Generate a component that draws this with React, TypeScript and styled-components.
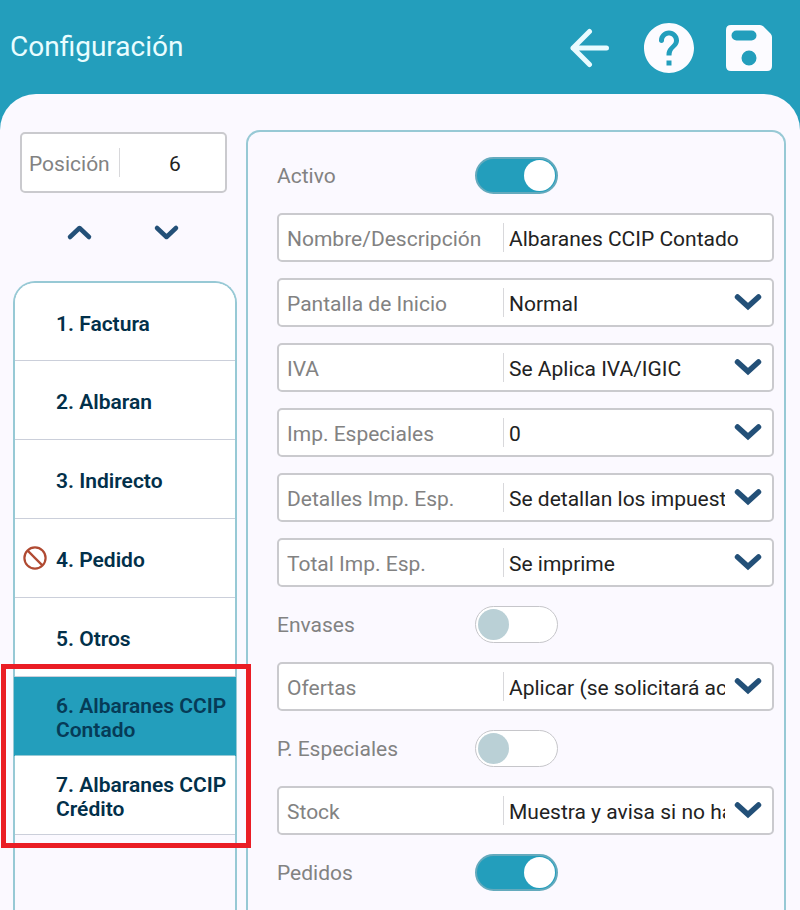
import React, { useState } from "react";
import styled, { createGlobalStyle, css } from "styled-components";

const teal = "#239ebc";
const surface = "#fbf9ff";
const outline = "#97c9d5";
const navy = "#235078";

const GlobalStyle = createGlobalStyle`
  *, *::before, *::after { box-sizing: border-box; }
  body {
    margin: 0;
    background: ${surface};
    font-family: Roboto, "Liberation Sans", sans-serif;
    font-size: 21px;
  }
  button, input, select { font: inherit; }
`;

const Page = styled.div`
  display: flex;
  flex-direction: column;
  height: 100vh;
  background: ${teal};
  overflow: hidden;
`;

const Header = styled.header`
  display: flex;
  flex: none;
  align-items: center;
  justify-content: space-between;
  height: 94px;
  padding: 0 28px 0 10px;
`;

const Title = styled.h1`
  margin: 0;
  color: #e9fdff;
  font-size: 28px;
  font-weight: 400;
  line-height: 32px;
`;

const Actions = styled.div`
  display: flex;
  align-items: center;
  gap: 32px;
  padding-top: 2px;
`;

const IconButton = styled.button`
  display: flex;
  padding: 0;
  border: 0;
  background: none;
  color: #fcfbff;
  cursor: pointer;
`;

const Content = styled.main`
  display: grid;
  flex: 1;
  min-height: 0;
  grid-template-columns: 224px 1fr;
  gap: 9px;
  padding: 36px 14px 0 13px;
  border-radius: 36px 36px 0 0;
  background: ${surface};
`;

const Sidebar = styled.aside`
  display: flex;
  flex-direction: column;
  min-height: 0;
`;

const box = css`
  display: flex;
  align-items: center;
  border: 2px solid #cacace;
  border-radius: 5px;
  background: #fff;
`;

const PositionBox = styled.div`
  ${box}
  flex: none;
  height: 61px;
  margin: 2px 10px 0 7px;
  padding-left: 7px;
`;

const fieldCaption = css`
  flex: none;
  height: 29px;
  padding-top: 2px;
  border-right: 1px solid #d8d8db;
  color: #828282;
  line-height: 29px;
`;

const PositionLabel = styled.label`
  ${fieldCaption}
  width: 91px;
`;

const PositionInput = styled.input`
  flex: 1;
  min-width: 0;
  padding: 3px 0 0 5px;
  border: 0;
  outline: 0;
  background: none;
  color: #222;
  text-align: center;
`;

const Movers = styled.div`
  display: flex;
  flex: none;
  align-items: center;
  gap: 59px;
  height: 88px;
  padding: 0 0 8px 52px;
`;

const MoveButton = styled(IconButton)`
  color: ${navy};
`;

const List = styled.ul`
  flex: 1;
  margin: 0;
  padding: 0;
  list-style: none;
  border: 2px solid ${outline};
  border-bottom: 0;
  border-radius: 22px 22px 0 0;
`;

const Item = styled.li`
  &:first-child button {
    height: 78px;
    border-radius: 20px 20px 0 0;
  }
`;

const ItemButton = styled.button<{ $selected: boolean }>`
  display: grid;
  grid-template-columns: 24px 1fr;
  align-items: center;
  gap: 9px;
  width: 100%;
  height: 79px;
  padding: 4px 0 0 8px;
  border: 0;
  border-bottom: 1px solid ${(p) => (p.$selected ? outline : "#cbcfda")};
  background: ${(p) => (p.$selected ? teal : "#fff")};
  box-shadow: ${(p) => (p.$selected ? `-1px 0 ${teal}, 1px 0 ${teal}` : "none")};
  color: ${(p) => (p.$selected ? "#063b57" : "#02304a")};
  font-weight: 600;
  line-height: 24px;
  text-align: left;
  cursor: pointer;
`;

const MarkedGroup = styled.ul`
  position: relative;
  margin: 0;
  padding: 0;
  list-style: none;

  &::after {
    content: "";
    position: absolute;
    inset: -13px -16px -13px -14px;
    border: 5px solid #ea1d25;
    pointer-events: none;
  }
  li:first-child button {
    height: 79px;
    border-radius: 0;
  }
`;

const Panel = styled.form`
  display: flex;
  flex-direction: column;
  gap: 16px;
  min-width: 0;
  padding: 22px 10px 0 29px;
  border: 2px solid ${outline};
  border-bottom: 0;
  border-radius: 14px 14px 0 0;
`;

const ToggleRow = styled.div`
  display: flex;
  flex: none;
  align-items: center;
  height: 43px;
`;

const ToggleLabel = styled.label`
  width: 198px;
  color: #828282;
`;

const Toggle = styled.input`
  appearance: none;
  display: flex;
  align-items: center;
  width: 83px;
  height: 37px;
  margin: 0;
  padding: 0 2px;
  border: 1px solid #c6c6ca;
  border-radius: 19px;
  background: #fff;
  cursor: pointer;

  &::before {
    content: "";
    width: 31px;
    height: 31px;
    border-radius: 50%;
    background: #bad0d6;
  }
  &:checked {
    justify-content: flex-end;
    border: 2px solid #64aabd;
    padding: 0 1px;
    background: ${teal};
  }
  &:checked::before { background: #fff; }
`;

const Field = styled.div`
  ${box}
  position: relative;
  flex: none;
  height: 49px;
  padding-left: 8px;
`;

const FieldLabel = styled.label`
  ${fieldCaption}
  width: 217px;
`;

const fieldControl = css`
  flex: 1;
  min-width: 0;
  width: 100%;
  height: 100%;
  margin: 0;
  border: 0;
  outline: 0;
  background: none;
  color: #222;
`;

const TextInput = styled.input`
  ${fieldControl}
  padding: 3px 8px 0 5px;
`;

const Select = styled.select`
  ${fieldControl}
  appearance: none;
  padding: 3px 47px 0 5px;
  text-overflow: clip;
  cursor: pointer;
`;

const SelectArrow = styled.svg`
  position: absolute;
  right: 10px;
  top: 13px;
  pointer-events: none;
`;

const ChevronDown = () => (
  <SelectArrow width="28" height="18" viewBox="0 0 28 18" fill="none" stroke={navy} strokeWidth="5.5" strokeLinecap="round" strokeLinejoin="miter" aria-hidden="true">
    <path d="M3.5 4 14 13.500 24.500 4" />
  </SelectArrow>
);

const BanIcon = () => (
  <svg width="24" height="24" viewBox="0 0 24 24" fill="none" stroke="#b04a32" strokeWidth="2.2" role="img" aria-label="Bloqueado">
    <circle cx="12" cy="12" r="10.6" />
    <path d="m4.400 4.400 15.200 15.200" />
  </svg>
);

const documents = ["Factura", "Albaran", "Indirecto", "Pedido", "Otros", "Albaranes CCIP Contado", "Albaranes CCIP Crédito"];
const blocked = "Pedido";

type Row =
  | { kind: "toggle"; id: string; label: string; on: boolean }
  | { kind: "text" | "select"; id: string; label: string; value: string };

const rows: Row[] = [
  { kind: "toggle", id: "activo", label: "Activo", on: true },
  { kind: "text", id: "nombre", label: "Nombre/Descripción", value: "Albaranes CCIP Contado" },
  { kind: "select", id: "pantalla", label: "Pantalla de Inicio", value: "Normal" },
  { kind: "select", id: "iva", label: "IVA", value: "Se Aplica IVA/IGIC" },
  { kind: "select", id: "especiales", label: "Imp. Especiales", value: "0" },
  { kind: "select", id: "detalles", label: "Detalles Imp. Esp.", value: "Se detallan los impuestos" },
  { kind: "select", id: "total", label: "Total Imp. Esp.", value: "Se imprime" },
  { kind: "toggle", id: "envases", label: "Envases", on: false },
  { kind: "select", id: "ofertas", label: "Ofertas", value: "Aplicar (se solicitará aceptación)" },
  { kind: "toggle", id: "precios", label: "P. Especiales", on: false },
  { kind: "select", id: "stock", label: "Stock", value: "Muestra y avisa si no hay" },
  { kind: "toggle", id: "pedidos", label: "Pedidos", on: true },
];

function FormRow({ row }: { row: Row }) {
  if (row.kind === "toggle") {
    return (
      <ToggleRow>
        <ToggleLabel htmlFor={row.id}>{row.label}</ToggleLabel>
        <Toggle id={row.id} type="checkbox" role="switch" defaultChecked={row.on} />
      </ToggleRow>
    );
  }
  return (
    <Field>
      <FieldLabel htmlFor={row.id}>{row.label}</FieldLabel>
      {row.kind === "text" ? (
        <TextInput id={row.id} type="text" defaultValue={row.value} />
      ) : (
        <>
          <Select id={row.id}>
            <option>{row.value}</option>
          </Select>
          <ChevronDown />
        </>
      )}
    </Field>
  );
}

export default function App() {
  const [selected, setSelected] = useState(5);

  const renderItem = (name: string, index: number) => (
    <Item key={name}>
      <ItemButton type="button" $selected={index === selected} onClick={() => setSelected(index)}>
        <span>{name === blocked && <BanIcon />}</span>
        <span>{`${index + 1}. ${name}`}</span>
      </ItemButton>
    </Item>
  );

  return (
    <>
      <GlobalStyle />
      <Page>
        <Header>
          <Title>Configuración</Title>
          <Actions>
            <IconButton type="button" aria-label="Volver">
              <svg width="42" height="42" viewBox="0 0 42 42" fill="none" stroke="#e9fbff" strokeWidth="5" strokeLinecap="round" strokeLinejoin="round">
                <path d="M36.500 21H3M19.500 4.500 3 21l16.500 16.500" />
              </svg>
            </IconButton>
            <IconButton type="button" aria-label="Ayuda">
              <svg width="50" height="50" viewBox="2 2 20 20" fill="currentColor">
                <path d="M12 2C6.48 2 2 6.48 2 12s4.48 10 10 10 10-4.48 10-10S17.52 2 12 2zm1 17h-2v-2h2v2zm2.07-7.75-.9.92C13.45 12.9 13 13.5 13 15h-2v-.5c0-1.1.45-2.1 1.17-2.83l1.24-1.26c.37-.36.59-.86.59-1.41 0-1.1-.9-2-2-2s-2 .9-2 2c0 .6-.4 1-1 1s-1-.4-1-1c0-2.21 1.79-4 4-4s4 1.79 4 4c0 .88-.36 1.68-.93 2.25z" />
              </svg>
            </IconButton>
            <IconButton type="button" aria-label="Guardar">
              <svg width="46" height="46" viewBox="0 0 46 46" fill="currentColor" fillRule="evenodd">
                <path d="M5 0H34Q36 0 37.5 1.5L44.5 8.5Q46 10 46 12V41Q46 46 41 46H5Q0 46 0 41V5Q0 0 5 0ZM10.5 5.5A5 5 0 0 0 10.5 15.5H25.5A5 5 0 0 0 25.5 5.5ZM23 25.5A7.5 7.5 0 1 0 23 40.5A7.5 7.5 0 1 0 23 25.5Z" />
              </svg>
            </IconButton>
          </Actions>
        </Header>
        <Content>
          <Sidebar>
            <PositionBox>
              <PositionLabel htmlFor="posicion">Posición</PositionLabel>
              <PositionInput id="posicion" type="text" inputMode="numeric" defaultValue="6" />
            </PositionBox>
            <Movers>
              <MoveButton type="button" aria-label="Subir">
                <svg width="28" height="18" viewBox="0 0 28 18" fill="none" stroke="currentColor" strokeWidth="4.5" strokeLinecap="round" strokeLinejoin="round">
                  <path d="m5 13 9.500-9 9.500 9" />
                </svg>
              </MoveButton>
              <MoveButton type="button" aria-label="Bajar">
                <svg width="28" height="18" viewBox="0 0 28 18" fill="none" stroke="currentColor" strokeWidth="4.5" strokeLinecap="round" strokeLinejoin="round">
                  <path d="m5 4 9.500 9 9.500-9" />
                </svg>
              </MoveButton>
            </Movers>
            <List>
              {documents.slice(0, 5).map(renderItem)}
              <li>
                <MarkedGroup>{documents.slice(5).map((name, i) => renderItem(name, i + 5))}</MarkedGroup>
              </li>
            </List>
          </Sidebar>
          <Panel>
            {rows.map((row) => (
              <FormRow key={row.id} row={row} />
            ))}
          </Panel>
        </Content>
      </Page>
    </>
  );
}
